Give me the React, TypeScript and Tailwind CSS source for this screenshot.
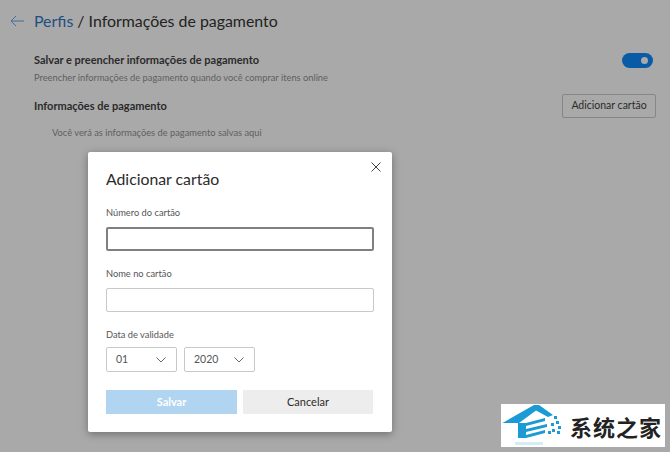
const FONT = "font-['Lato','Open_Sans',sans-serif]";

function Field({ label, focused }: { label: string; focused?: boolean }) {
  return (
    <div className="flex flex-col">
      <label className="text-[9.3px] leading-[12px] text-[#555]">{label}</label>
      <div
        className={
          focused
            ? "mt-[8px] h-[24px] rounded-[2px] border-2 border-[#808080] bg-white"
            : "mt-[8px] h-[24px] rounded-[2px] border border-[#c8c8c8] bg-white"
        }
      />
    </div>
  );
}

function Select({ value }: { value: string }) {
  return (
    <div className="flex h-[25px] w-[71px] items-center justify-between rounded-[2px] border border-[#c8c8c8] bg-white pl-[9px] pr-[10px] text-[10.5px] text-[#555]">
      <span>{value}</span>
      <svg width="10" height="6" viewBox="0 0 10 6" fill="none" stroke="#666" strokeWidth="1">
        <path d="M0.5 0.5 L5 5 L9.5 0.5" />
      </svg>
    </div>
  );
}

function Watermark() {
  return (
    <div className="absolute left-[501px] top-[404px] flex h-[43px] w-[164px] items-center bg-white">
      <svg width="62" height="43" viewBox="0 0 62 43" className="shrink-0">
        <path d="M1.5 19 L33 1 L38 1 L52 11 L47 13 L35 6.5 L18 19 Z" fill="#1b9ad6" />
        <path d="M17 19 H25 V34 H17 Z" fill="#1b9ad6" />
        <path d="M25 19 L44 14 V17 L25 22 Z M25 25 L46 20 V23 L25 28 Z M25 31 L44 26 V29 L25 34 Z" fill="#1b9ad6" />
        <path d="M53 12 h3 v3 h-3 Z M55 17 h3 v3 h-3 Z M50 19 h3 v3 h-3 Z M57 22 h3 v3 h-3 Z M51 25 h3 v3 h-3 Z M56 27 h3 v3 h-3 Z M47 27 h3 v3 h-3 Z" fill="#1b9ad6" />
        <path d="M14 38 H42 V41 H14 Z" fill="#d5ebf6" />
      </svg>
      <span className="ml-[7px] font-['Noto_Sans_CJK_SC',sans-serif] text-[22px] font-bold leading-none tracking-[1px] text-[#222]">
        系统之家
      </span>
    </div>
  );
}

export default function App() {
  return (
    <div className={`relative h-[452px] w-[670px] overflow-hidden bg-[#a9a9a9] ${FONT}`}>
      <div className="pt-[10px] pl-[10px] pr-[14px]">
        <div className="flex h-[22px] items-center">
          <svg width="14" height="12" viewBox="0 0 14 12" fill="none" stroke="#3f6f9c" strokeWidth="1">
            <path d="M6 1 L1 6 L6 11 M1 6 H14" />
          </svg>
          <h1 className="ml-[10px] text-[15.9px] font-normal leading-[22px] text-[#222]">
            <span className="text-[#1d4f82]">Perfis</span> / Informações de pagamento
          </h1>
        </div>

        <div className="mt-[21px] flex items-start justify-between pl-[24px]">
          <div>
            <p className="text-[11px] font-bold leading-[14px] text-[#2b2b2b]">
              Salvar e preencher informações de pagamento
            </p>
            <p className="mt-[4px] text-[9.3px] leading-[14px] text-[#5f5f5f]">
              Preencher informações de pagamento quando você comprar itens online
            </p>
          </div>
          <div className="mr-[3px] flex h-[15px] w-[31px] items-center justify-end rounded-full bg-[#0a5ba6] pr-[5px]">
            <div className="h-[7px] w-[7px] rounded-full bg-[#a9a9a9]" />
          </div>
        </div>

        <div className="mt-[9px] flex items-center justify-between pl-[24px]">
          <p className="text-[11px] font-bold leading-[14px] text-[#2b2b2b]">Informações de pagamento</p>
          <button className="flex h-[24px] w-[94px] items-center justify-center rounded-[2px] border border-[#868686] text-[10.5px] text-[#2b2b2b]">
            Adicionar cartão
          </button>
        </div>

        <p className="mt-[8px] pl-[42px] text-[9.3px] leading-[14px] text-[#5f5f5f]">
          Você verá as informações de pagamento salvas aqui
        </p>
      </div>

      <div className="absolute left-[88px] top-[152px] h-[280px] w-[304px] rounded-[2px] bg-white px-[18px] pt-[17px] shadow-[0_2px_8px_rgba(0,0,0,0.35)]">
        <button className="absolute right-[11px] top-[10px]">
          <svg width="10" height="10" viewBox="0 0 10 10" fill="none" stroke="#444" strokeWidth="1" className="block">
            <path d="M0.5 0.5 L9.5 9.5 M9.5 0.5 L0.5 9.5" />
          </svg>
        </button>
        <h2 className="text-[15.8px] font-normal leading-[20px] text-[#2b2b2b]">Adicionar cartão</h2>
        <div className="mt-[18px] flex flex-col gap-[17px]">
          <Field label="Número do cartão" focused />
          <Field label="Nome no cartão" />
        </div>
        <label className="mt-[17px] block text-[9.3px] leading-[12px] text-[#555]">Data de validade</label>
        <div className="mt-[6px] flex gap-[7px]">
          <Select value="01" />
          <Select value="2020" />
        </div>
        <div className="mt-[18px] flex gap-[6px]">
          <button className="h-[24px] w-[131px] bg-[#b1d4f0] text-[11px] font-bold text-white">Salvar</button>
          <button className="h-[24px] w-[130px] bg-[#ededed] text-[11px] text-[#2b2b2b]">Cancelar</button>
        </div>
      </div>

      <Watermark />
    </div>
  );
}
